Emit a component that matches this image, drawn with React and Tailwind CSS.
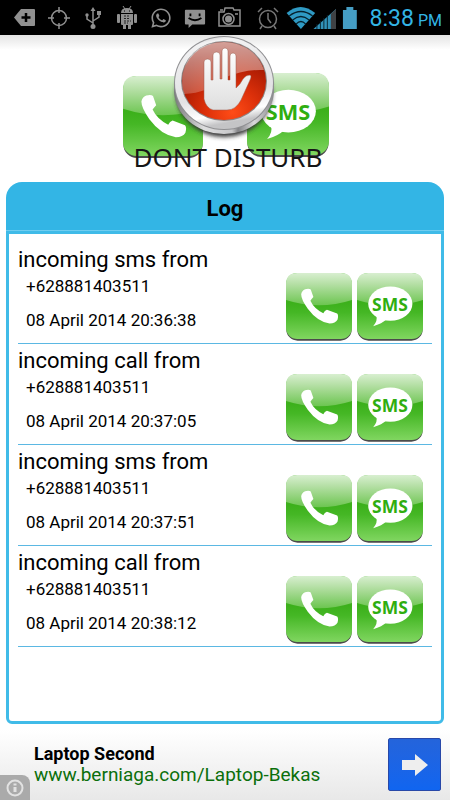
import React from "react";
import { FaWhatsapp } from "react-icons/fa";

const entries = [
  { kind: "sms", number: "+628881403511", date: "08 April 2014 20:36:38" },
  { kind: "call", number: "+628881403511", date: "08 April 2014 20:37:05" },
  { kind: "sms", number: "+628881403511", date: "08 April 2014 20:37:51" },
  { kind: "call", number: "+628881403511", date: "08 April 2014 20:38:12" },
];

const HANDSET =
  "M58 49 Q70 46 75 50 L83 73 Q78 78 74 84 Q85 108 113 122 Q117 113 124 111 L155 123 Q160 128 156 142 Q150 153 132 153 Q95 147 66 108 Q46 80 46 64 Q48 53 58 49Z";

function Defs() {
  return (
    <svg className="absolute size-0" aria-hidden="true">
      <defs>
        <linearGradient id="tile" x1="0" y1="0" x2="0" y2="1">
          <stop offset="0" stopColor="#4fbb30" />
          <stop offset="0.45" stopColor="#3cb01b" />
          <stop offset="0.6" stopColor="#45b725" />
          <stop offset="1" stopColor="#80d660" />
        </linearGradient>
        <linearGradient id="gloss" x1="0" y1="0" x2="0" y2="1">
          <stop offset="0" stopColor="#d8efd0" />
          <stop offset="0.35" stopColor="#b4dfa4" />
          <stop offset="1" stopColor="#6cc550" />
        </linearGradient>
        <linearGradient id="rim" x1="0" y1="0" x2="0.2" y2="1">
          <stop offset="0" stopColor="#a9a9ab" />
          <stop offset="0.12" stopColor="#f2f2f3" />
          <stop offset="0.7" stopColor="#e2e2e4" />
          <stop offset="0.9" stopColor="#ffffff" />
          <stop offset="1" stopColor="#c4c4c6" />
        </linearGradient>
        <linearGradient id="edge" x1="0" y1="0" x2="1" y2="0">
          <stop offset="0" stopColor="#77777a" />
          <stop offset="0.3" stopColor="#dededf" />
          <stop offset="0.58" stopColor="#c8c8ca" />
          <stop offset="0.64" stopColor="#838386" />
          <stop offset="0.8" stopColor="#d8d8da" />
          <stop offset="1" stopColor="#88888b" />
        </linearGradient>
        <radialGradient id="red" cx="0.6" cy="0.9" r="0.8">
          <stop offset="0" stopColor="#ff4c17" />
          <stop offset="0.4" stopColor="#dc300a" />
          <stop offset="1" stopColor="#941200" />
        </radialGradient>
        <linearGradient id="shine" x1="0" y1="0" x2="0" y2="1">
          <stop offset="0" stopColor="#ffffff" stopOpacity="0.6" />
          <stop offset="1" stopColor="#ffffff" stopOpacity="0.22" />
        </linearGradient>
        <linearGradient id="hand" x1="0" y1="0" x2="0" y2="1">
          <stop offset="0" stopColor="#ffffff" />
          <stop offset="1" stopColor="#dedede" />
        </linearGradient>
        <filter id="soft" x="-20%" y="-20%" width="140%" height="140%">
          <feGaussianBlur stdDeviation="2" />
        </filter>
      </defs>
    </svg>
  );
}

function TileArt({ kind }) {
  return (
    <g>
      <rect x="1" y="7" width="198" height="198" rx="34" fill="#4b4b4b" />
      <rect x="0" y="0" width="200" height="200" rx="34" fill="url(#tile)" />
      <path d="M0 82 V34 Q0 0 34 0 H166 Q200 0 200 34 V82 Q150 98 100 98 T0 82Z" fill="url(#gloss)" />
      {kind === "call" ? (
        <path d={HANDSET} fill="#fff" />
      ) : (
        <g>
          <ellipse cx="101" cy="93" rx="67" ry="52" fill="#fff" />
          <path d="M58 128 Q64 144 49 161 Q76 153 90 140Z" fill="#fff" />
          <text x="100" y="114" textAnchor="middle" fontSize="53" fontWeight="700" fill="#2fae10" fontFamily="'Noto Sans', sans-serif">
            SMS
          </text>
        </g>
      )}
    </g>
  );
}

function Tile({ kind, label }) {
  return (
    <button type="button" aria-label={label} className="block">
      <svg viewBox="0 0 200 206" className="block h-[68px] w-[66px]">
        <TileArt kind={kind} />
      </svg>
    </button>
  );
}

function Logo() {
  return (
    <svg viewBox="0 0 230 140" className="block h-[140px] w-[230px]" role="img" aria-label="Dont Disturb">
      <g transform="translate(13 41) scale(0.4)">
        <TileArt kind="call" />
      </g>
      <g transform="translate(137 38) scale(0.41)">
        <TileArt kind="sms" />
      </g>
      <ellipse cx="114" cy="58" rx="48" ry="44" fill="#333" filter="url(#soft)" />
      <ellipse cx="114" cy="55" rx="50" ry="44" fill="url(#edge)" />
      <ellipse cx="114" cy="48" rx="50" ry="47" fill="#8f8f92" />
      <ellipse cx="114" cy="48" rx="49" ry="46" fill="url(#rim)" />
      <ellipse cx="114" cy="46" rx="43" ry="40" fill="#8b8585" />
      <ellipse cx="114" cy="46" rx="42" ry="39" fill="url(#red)" />
      <path d="M74 59 Q71 50 73 38 Q80 8 114 7 Q145 9 154 35 Q134 34 114 43 Q98 58 74 59Z" fill="url(#shine)" />
      <path
        d="M94 27 Q94 24 97.500 24 Q101 24 101 27 V45 H103 V20 Q103 17 106.500 17 Q110 17 110 20 V44 H112 V16 Q112 13 115 13 Q118 13 118 16 V45 H120 V21 Q120 18 123 18 Q126 18 126 21 V53 Q130 50 133 44 Q136 40 140 40 Q142 41 140 45 L131 65 Q126 75 117 75 H103 Q96 73 94 64Z"
        fill="url(#hand)"
        stroke="#9c5a4c"
        strokeWidth="0.500"
      />
      <text x="118" y="132" textAnchor="middle" fontSize="26" fill="#161616" fontFamily="'Noto Sans', sans-serif">
        DONT DISTURB
      </text>
    </svg>
  );
}

function StatusBar() {
  return (
    <header className="flex h-[35px] shrink-0 items-center justify-between bg-black pr-2 pl-3 text-[#909090]">
      <div className="flex items-center gap-3">
        <svg viewBox="0 0 24 22" className="h-[22px] w-6">
          <path d="M9 2h13q1 0 1 1v15q0 1-1 1H9L2 10.500Z" fill="currentColor" />
          <path d="M14 6v9M9.500 10.500h9" stroke="#000" strokeWidth="2.500" />
        </svg>
        <svg viewBox="0 0 22 22" className="size-[22px]" fill="none" stroke="currentColor" strokeWidth="1.500">
          <circle cx="11" cy="11" r="7.500" />
          <path d="M11 0v6M11 16v6M0 11h6M16 11h6" />
        </svg>
        <svg viewBox="0 0 22 24" className="h-6 w-[22px]" fill="none" stroke="currentColor" strokeWidth="1.500">
          <path d="M11 4v16M11 17L5 13V9M11 15l6-4V7" />
          <path d="M11 1l2.500 4h-5Z" fill="currentColor" stroke="none" />
          <circle cx="11" cy="20.500" r="2.500" fill="currentColor" stroke="none" />
          <circle cx="5" cy="9" r="1.700" fill="currentColor" stroke="none" />
          <path d="M15 5h4v4h-4Z" fill="currentColor" stroke="none" />
        </svg>
        <svg viewBox="0 0 22 24" className="h-6 w-[22px]" fill="currentColor">
          <path d="M5 7q0-5 6-5t6 5ZM5 8h12v10q0 1-1 1h-1v4h-3v-4h-2v4H7v-4H6q-1 0-1-1Z" />
          <rect x="1" y="8" width="3" height="9" rx="1" />
          <rect x="18" y="8" width="3" height="9" rx="1" />
          <path d="M7 0l2 3M15 0l-2 3" stroke="currentColor" />
          <path d="M8 10h6M8 12.500h5M8 15h7M8 17h4" stroke="#222" strokeDasharray="2 1" />
          <path d="M8 5h1M13 5h1" stroke="#000" />
        </svg>
        <FaWhatsapp className="size-[22px]" />
        <svg viewBox="0 0 24 24" className="size-[22px]">
          <path d="M2 3h20q1 0 1 1v14q0 1-1 1H9l-4 4v-4H2q-1 0-1-1V4q0-1 1-1Z" fill="currentColor" />
          <path d="M6 7h2v3H6ZM16 7h2v3h-2Z" fill="#000" />
          <path d="M5 12q7 5 14 0" fill="none" stroke="#000" strokeWidth="2" />
        </svg>
        <svg viewBox="2 0 24 24" className="size-6" fill="none" stroke="currentColor" strokeWidth="1.500">
          <path d="M3 6h5l1-4h8l1 2h6v16H3ZM4 4h3" />
          <circle cx="12.500" cy="13" r="5.500" />
          <circle cx="12.500" cy="13" r="3.500" fill="currentColor" stroke="none" />
          <path d="M19 8h3" />
        </svg>
      </div>
      <div className="flex items-center">
        <svg viewBox="0 0 24 24" className="size-6" fill="none" stroke="#777" strokeWidth="1.500">
          <circle cx="12" cy="13" r="8.500" />
          <path d="M12 7v6l3 4M2 6l4-4M22 6l-4-4M6 20l-2 3M18 20l2 3" />
        </svg>
        <svg viewBox="0 0 90 24" className="ml-1 h-6 w-[78px]" preserveAspectRatio="none" fill="none">
          <path d="M3 7Q19-5 36 7L19.500 23Z" fill="#2f9ac4" />
          <path d="M6 10Q19.500 1 33 10M10 14Q19.500 7 29 14M14 18Q19.500 13 25 18" stroke="#06222e" strokeWidth="1.300" />
          <path d="M34 23L60 3V23Z" fill="#3292b9" />
          <path d="M54 8l6-5V23H54Z" fill="#3f4245" />
          <path d="M38 18v5M42 15v8M46 12v11M50 9v14" stroke="#092530" />
          <path d="M68 4h4V1h8v3h4v19H68Z" fill="#459dc4" />
        </svg>
        <span className="ml-2 flex items-baseline gap-1 pt-1 text-[#33b5e5]">
          <span className="text-[23px] leading-6">8:38</span>
          <span className="text-[16px] leading-6">PM</span>
        </span>
      </div>
    </header>
  );
}

export default function App() {
  return (
    <div className="flex min-h-screen flex-col bg-white font-[Roboto,sans-serif] text-black">
      <Defs />
      <StatusBar />
      <div className="flex justify-center bg-linear-to-b from-[#e4e4e4] to-white to-10% pb-[7px]">
        <Logo />
      </div>
      <main className="mx-[6px] flex flex-1 flex-col">
        <h1 className="flex h-[49px] items-center justify-center rounded-t-2xl border-b border-[#6fcdf0] bg-[#33b5e5] pt-1 text-[22px] font-bold">
          Log
        </h1>
        <section className="flex-1 rounded-b-md border-[3px] border-[#40bbe8] px-[9px] pt-[9px]">
          <ul>
            {entries.map((e) => (
              <li key={e.date} className="flex h-[101px] items-end justify-between border-b border-[#5bb8e3]">
                <div className="self-start pt-1">
                  <h2 className="text-[22px] leading-[26px]">incoming {e.kind} from</h2>
                  <p className="pl-2 text-[17px] leading-[26px]">{e.number}</p>
                  <p className="mt-2 pl-2 text-[17px] leading-[26px]">{e.date}</p>
                </div>
                <div className="mr-[9px] mb-[2px] flex gap-[5px]">
                  <Tile kind="call" label={"Call " + e.number} />
                  <Tile kind="sms" label={"Send SMS to " + e.number} />
                </div>
              </li>
            ))}
          </ul>
        </section>
      </main>
      <footer className="mt-[6px] flex h-[70px] shrink-0 items-end bg-linear-to-b from-white to-[#e8e8e8]">
        <button type="button" aria-label="Ad information" className="flex h-[25px] w-[30px] items-center justify-center rounded-tr-lg bg-[#aaaaaa]">
          <svg viewBox="0 0 18 18" className="size-[18px]" fill="none" stroke="#e2e2e2" strokeWidth="2">
            <circle cx="9" cy="9" r="7.500" />
            <path d="M9 8v5M9 4.500v2" strokeWidth="3" />
          </svg>
        </button>
        <a href="#ad" className="ml-1 flex-1 self-start pt-[13px] text-[18px] leading-[21px]">
          <span className="block font-bold">Laptop Second</span>
          <span className="block text-[19px] leading-[21px] text-[#0b6f0b]">www.berniaga.com/Laptop-Bekas</span>
        </a>
        <button type="button" aria-label="Open ad" className="mr-[9px] mb-[9px] flex size-[53px] items-center justify-center rounded-xs border border-[#2848a8] bg-linear-to-b from-[#2464db] to-[#1065f0]">
          <svg viewBox="0 0 26 22" className="h-[22px] w-[26px]" fill="#eeeeee">
            <path d="M0 6h13V0l13 11-13 11v-6H0Z" />
          </svg>
        </button>
      </footer>
    </div>
  );
}
